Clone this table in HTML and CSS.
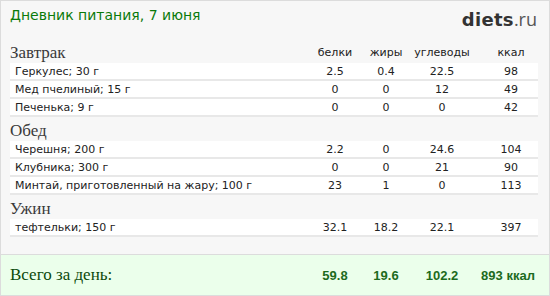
FILE: index.html
```html
<!DOCTYPE html>
<html>
<head>
<meta charset="utf-8">
<link rel="stylesheet" href="styles.css">
</head>
<body>
<div class="page">
  <div class="top">
    <div class="title">Дневник питания, 7 июня</div>
    <div class="logo"><span class="logo-main">diets</span><span class="logo-tld">.ru</span></div>
  </div>
  <div class="diary">
    <div class="meal-head">
      <div class="meal-name">Завтрак</div>
      <div class="col">белки</div>
      <div class="col">жиры</div>
      <div class="col">углеводы</div>
      <div class="col kcal">ккал</div>
    </div>
    <div class="row"><div class="name">Геркулес; 30 г</div><div class="col">2.5</div><div class="col">0.4</div><div class="col">22.5</div><div class="col kcal">98</div></div>
    <div class="row"><div class="name">Мед пчелиный; 15 г</div><div class="col">0</div><div class="col">0</div><div class="col">12</div><div class="col kcal">49</div></div>
    <div class="row"><div class="name">Печенька; 9 г</div><div class="col">0</div><div class="col">0</div><div class="col">0</div><div class="col kcal">42</div></div>

    <div class="meal-head"><div class="meal-name">Обед</div></div>
    <div class="row"><div class="name">Черешня; 200 г</div><div class="col">2.2</div><div class="col">0</div><div class="col">24.6</div><div class="col kcal">104</div></div>
    <div class="row"><div class="name">Клубника; 300 г</div><div class="col">0</div><div class="col">0</div><div class="col">21</div><div class="col kcal">90</div></div>
    <div class="row"><div class="name">Минтай, приготовленный на жару; 100 г</div><div class="col">23</div><div class="col">1</div><div class="col">0</div><div class="col kcal">113</div></div>

    <div class="meal-head"><div class="meal-name">Ужин</div></div>
    <div class="row"><div class="name">тефтельки; 150 г</div><div class="col">32.1</div><div class="col">18.2</div><div class="col">22.1</div><div class="col kcal">397</div></div>
  </div>
  <div class="totals">
    <div class="totals-grid">
      <div class="totals-label">Всего за день:</div>
      <div class="col">59.8</div>
      <div class="col">19.6</div>
      <div class="col">102.2</div>
      <div class="col tkcal">893 ккал</div>
    </div>
  </div>
</div>
</body>
</html>
```

FILE: styles.css
```css
html, body {
  margin: 0;
  padding: 0;
}
body {
  width: 550px;
  height: 296px;
  overflow: hidden;
}
.page {
  box-sizing: border-box;
  width: 550px;
  height: 296px;
  border: 1px solid #dcdcdc;
  background: #f7f7f7;
  display: flex;
  flex-direction: column;
}
.top {
  display: flex;
  justify-content: space-between;
  align-items: flex-start;
  height: 38px;
  padding: 6px 12px 0 9px;
  box-sizing: border-box;
}
.title {
  font-family: "DejaVu Sans", Verdana, sans-serif;
  font-size: 14px;
  line-height: 17px;
  color: #0a7a0a;
}
.logo {
  font-family: "DejaVu Sans", sans-serif;
  font-size: 18px;
  line-height: 20px;
  margin-top: 2px;
  color: #333;
}
.logo-main {
  font-weight: bold;
  letter-spacing: 0.3px;
}
.logo-tld {
  font-family: "Open Sans", sans-serif;
  font-weight: normal;
  color: #555;
}
.diary {
  margin: 0 11px 0 9px;
  flex: 1;
}
.meal-head, .row, .totals-grid {
  display: grid;
  grid-template-columns: 1fr 52px 50px 62px 65px;
  align-items: end;
}
.meal-head {
  height: 24px;
  padding-bottom: 2px;
  box-sizing: border-box;
}
.meal-name {
  font-family: "Liberation Serif", "Times New Roman", serif;
  font-size: 17px;
  line-height: 17px;
  color: #3a3a3a;
}
.meal-head .col {
  font-family: "DejaVu Sans", Verdana, sans-serif;
  font-size: 11px;
  line-height: 13px;
  color: #222;
  padding-bottom: 2px;
}
.col {
  text-align: center;
}
.kcal {
  padding-left: 11px;
}
.row {
  height: 18px;
  box-sizing: border-box;
  background: #ffffff;
  border-bottom: 2px solid #e8e8e8;
  align-items: center;
  font-family: "DejaVu Sans", Verdana, sans-serif;
  font-size: 11px;
  line-height: 13px;
  color: #222;
}
.row .name {
  padding-left: 5px;
  white-space: nowrap;
}
.totals {
  height: 41px;
  border-top: 1px solid #dcdcdc;
  background: #ebffeb;
  padding: 0 11px 0 9px;
  box-sizing: border-box;
  display: flex;
  align-items: center;
}
.totals-grid {
  width: 100%;
  align-items: center;
}
.totals-label {
  font-family: "Liberation Serif", "Times New Roman", serif;
  font-size: 17px;
  color: #0b4a0b;
}
.totals-grid .col {
  font-family: "Liberation Sans", Arial, sans-serif;
  font-weight: bold;
  font-size: 13px;
  color: #1d6b1d;
}
.tkcal {
  padding-left: 5px;
}
```
